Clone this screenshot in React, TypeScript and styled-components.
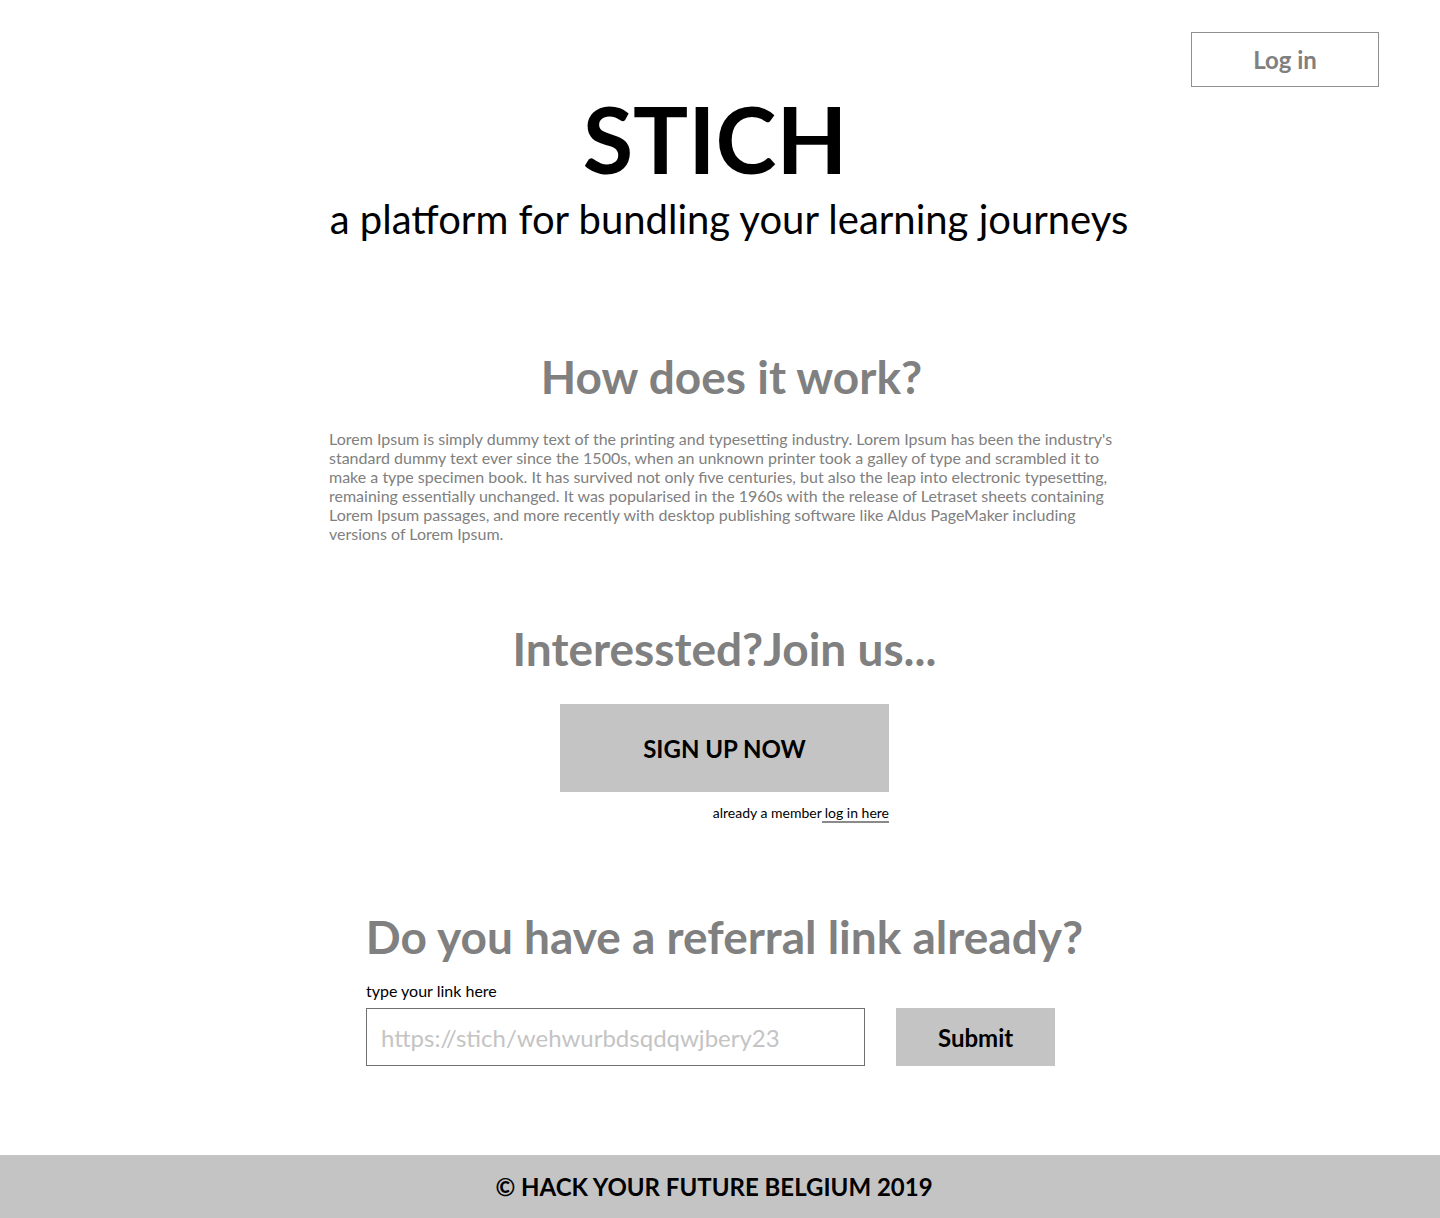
import React from "react";
import styled, { createGlobalStyle } from "styled-components";

const GlobalStyle = createGlobalStyle`
  * { box-sizing: border-box; }
  html, body { margin: 0; padding: 0; background: #ffffff; }
  body { font-family: Lato, "Open Sans", Arial, sans-serif; }
`;

const Page = styled.div`
  min-height: 1218px;
  display: flex;
  flex-direction: column;
`;

const TopBar = styled.header`
  display: flex;
  justify-content: flex-end;
  padding: 32px 61px 0 0;
`;

const LoginButton = styled.button`
  width: 188px;
  height: 55px;
  border: 1px solid #8f8f8f;
  background: #ffffff;
  color: #808080;
  font-family: Lato, sans-serif;
  font-weight: 700;
  font-size: 24px;
  padding: 0;
  cursor: pointer;
`;

const Main = styled.main`
  width: 800px;
  margin-left: calc(50% - 391px);
  display: flex;
  flex-direction: column;
  align-items: center;
`;

const Title = styled.h1`
  margin: 6px 28px 0 0;
  font-size: 92px;
  line-height: 1;
  font-weight: 700;
  color: #000000;
`;

const Subtitle = styled.p`
  margin: 10px 0 0;
  font-size: 40px;
  line-height: 48px;
  font-weight: 400;
  color: #000000;
`;

const SectionHeading = styled.h2<{ $top: number; $shift?: number }>`
  margin: ${(p) => p.$top}px ${(p) => p.$shift ?? 0}px 0 0;
  font-size: 46px;
  line-height: 56px;
  font-weight: 700;
  color: #808080;
  white-space: nowrap;
`;

const Paragraph = styled.p`
  align-self: stretch;
  margin: 24px 0 0;
  font-size: 16px;
  line-height: 19px;
  color: #808080;
`;

const SignupBlock = styled.div`
  margin: 27px 9px 0 0;
  width: 329px;
  display: flex;
  flex-direction: column;
`;

const SignupButton = styled.button`
  height: 88px;
  width: 100%;
  border: none;
  background: #c4c4c4;
  color: #000000;
  font-family: Lato, sans-serif;
  font-weight: 700;
  font-size: 24px;
  padding: 0;
  cursor: pointer;
`;

const MemberLine = styled.p`
  margin: 12px 0 0;
  text-align: right;
  font-size: 14px;
  line-height: 17px;
  color: #000000;
`;

const MemberLink = styled.a`
  color: #000000;
  text-decoration: none;
  border-bottom: 2px solid #8a8a8a;
  padding: 0 0 0 3px;
`;

const ReferralForm = styled.form`
  margin-top: 16px;
  width: 689px;
  align-self: flex-start;
  margin-left: 37px;
  display: flex;
  flex-direction: column;
`;

const FieldLabel = styled.label`
  font-size: 16px;
  line-height: 19px;
  color: #000000;
`;

const FieldRow = styled.div`
  margin-top: 8px;
  display: flex;
  gap: 31px;
`;

const LinkInput = styled.input`
  width: 500px;
  height: 58px;
  border: 1px solid #707070;
  padding: 0 14px;
  font-family: Lato, sans-serif;
  font-size: 24px;
  color: #000000;
  outline: none;
  &::placeholder { color: #c4c4c4; }
`;

const SubmitButton = styled.button`
  width: 159px;
  height: 58px;
  border: none;
  background: #c4c4c4;
  color: #000000;
  font-family: Lato, sans-serif;
  font-weight: 700;
  font-size: 24px;
  padding: 0;
  cursor: pointer;
`;

const Footer = styled.footer`
  margin-top: auto;
  height: 63px;
  background: #c4c4c4;
  display: flex;
  align-items: center;
  justify-content: center;
  padding-right: 12px;
  font-size: 24px;
  font-weight: 700;
  color: #000000;
`;

export default function App() {
  return (
    <>
      <GlobalStyle />
      <Page>
        <TopBar>
          <LoginButton>Log in</LoginButton>
        </TopBar>
        <Main>
          <Title>STICH</Title>
          <Subtitle>a platform for bundling your learning journeys</Subtitle>
          <SectionHeading $top={106} $shift={-5}>How does it work?</SectionHeading>
          <Paragraph>
            Lorem Ipsum is simply dummy text of the printing and typesetting industry. Lorem Ipsum has been the industry's standard dummy text ever since the 1500s, when an unknown printer took a galley of type and scrambled it to make a type specimen book. It has survived not only five centuries, but also the leap into electronic typesetting, remaining essentially unchanged. It was popularised in the 1960s with the release of Letraset sheets containing Lorem Ipsum passages, and more recently with desktop publishing software like Aldus PageMaker including versions of Lorem Ipsum.
          </Paragraph>
          <SectionHeading $top={78} $shift={9}>Interessted?Join us...</SectionHeading>
          <SignupBlock>
            <SignupButton>SIGN UP NOW</SignupButton>
            <MemberLine>
              already a member<MemberLink href="#">log in here</MemberLink>
            </MemberLine>
          </SignupBlock>
          <SectionHeading $top={88} $shift={9}>Do you have a referral link already?</SectionHeading>
          <ReferralForm onSubmit={(e) => e.preventDefault()}>
            <FieldLabel htmlFor="ref">type your link here</FieldLabel>
            <FieldRow>
              <LinkInput id="ref" placeholder="https://stich/wehwurbdsqdqwjbery23" />
              <SubmitButton type="submit">Submit</SubmitButton>
            </FieldRow>
          </ReferralForm>
        </Main>
        <Footer>© HACK YOUR FUTURE BELGIUM 2019</Footer>
      </Page>
    </>
  );
}
